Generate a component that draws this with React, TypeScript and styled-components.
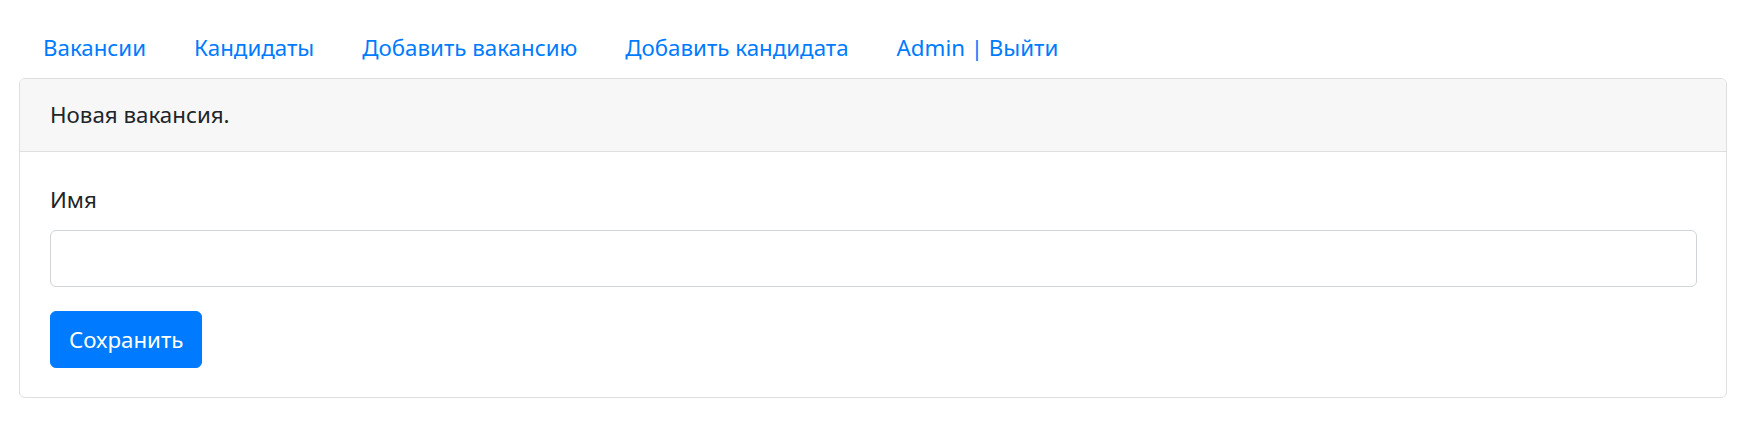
import React from "react";
import styled, { createGlobalStyle } from "styled-components";

const GlobalStyle = createGlobalStyle`
  html, body {
    margin: 0;
    padding: 0;
    background: #ffffff;
  }
  body {
    font-family: "Noto Sans", "Open Sans", sans-serif;
    font-size: 22.3px;
    line-height: 36px;
    color: #212529;
  }
  * { box-sizing: border-box; }
`;

const Page = styled.div`
  padding: 18px 19px 0 19px;
`;

const Nav = styled.nav`
  display: flex;
  align-items: center;
`;

const NavLink = styled.a`
  display: block;
  padding: 12px 24px;
  color: #007bff;
  text-decoration: none;
  font-size: 22.3px;
  line-height: 36px;
  cursor: pointer;
`;

const Card = styled.section`
  border: 1px solid #dfdfdf;
  border-radius: 6px;
  overflow: hidden;
  background: #ffffff;
`;

const CardHeader = styled.header`
  background: #f7f7f7;
  border-bottom: 1px solid #dfdfdf;
  padding: 18px 30px;
  font-size: 22.3px;
  line-height: 36px;
  color: #212529;
`;

const CardBody = styled.div`
  padding: 30px 29px 29px 30px;
`;

const FormGroup = styled.div`
  display: flex;
  flex-direction: column;
  margin-bottom: 24px;
`;

const Label = styled.label`
  font-size: 22.3px;
  line-height: 36px;
  margin-bottom: 12px;
  color: #212529;
`;

const Input = styled.input`
  height: 57px;
  border: 1px solid #ced4da;
  border-radius: 6px;
  padding: 9px 18px;
  font: inherit;
  color: #495057;
  outline: none;
`;

const Button = styled.button`
  align-self: flex-start;
  height: 57px;
  padding: 9px 18px;
  border: 1px solid #007bff;
  border-radius: 6px;
  background: #007bff;
  color: #ffffff;
  font-family: "Noto Sans", "Open Sans", sans-serif;
  font-size: 22.3px;
  line-height: 36px;
  cursor: pointer;
`;

const Form = styled.form`
  display: flex;
  flex-direction: column;
`;

const links = [
  "Вакансии",
  "Кандидаты",
  "Добавить вакансию",
  "Добавить кандидата",
  "Admin | Выйти",
];

export default function App() {
  return (
    <>
      <GlobalStyle />
      <Page>
        <Nav>
          {links.map((l) => (
            <NavLink key={l}>{l}</NavLink>
          ))}
        </Nav>
        <Card>
          <CardHeader>Новая вакансия.</CardHeader>
          <CardBody>
            <Form onSubmit={(e) => e.preventDefault()}>
              <FormGroup>
                <Label htmlFor="name">Имя</Label>
                <Input id="name" type="text" />
              </FormGroup>
              <Button type="submit">Сохранить</Button>
            </Form>
          </CardBody>
        </Card>
      </Page>
    </>
  );
}
